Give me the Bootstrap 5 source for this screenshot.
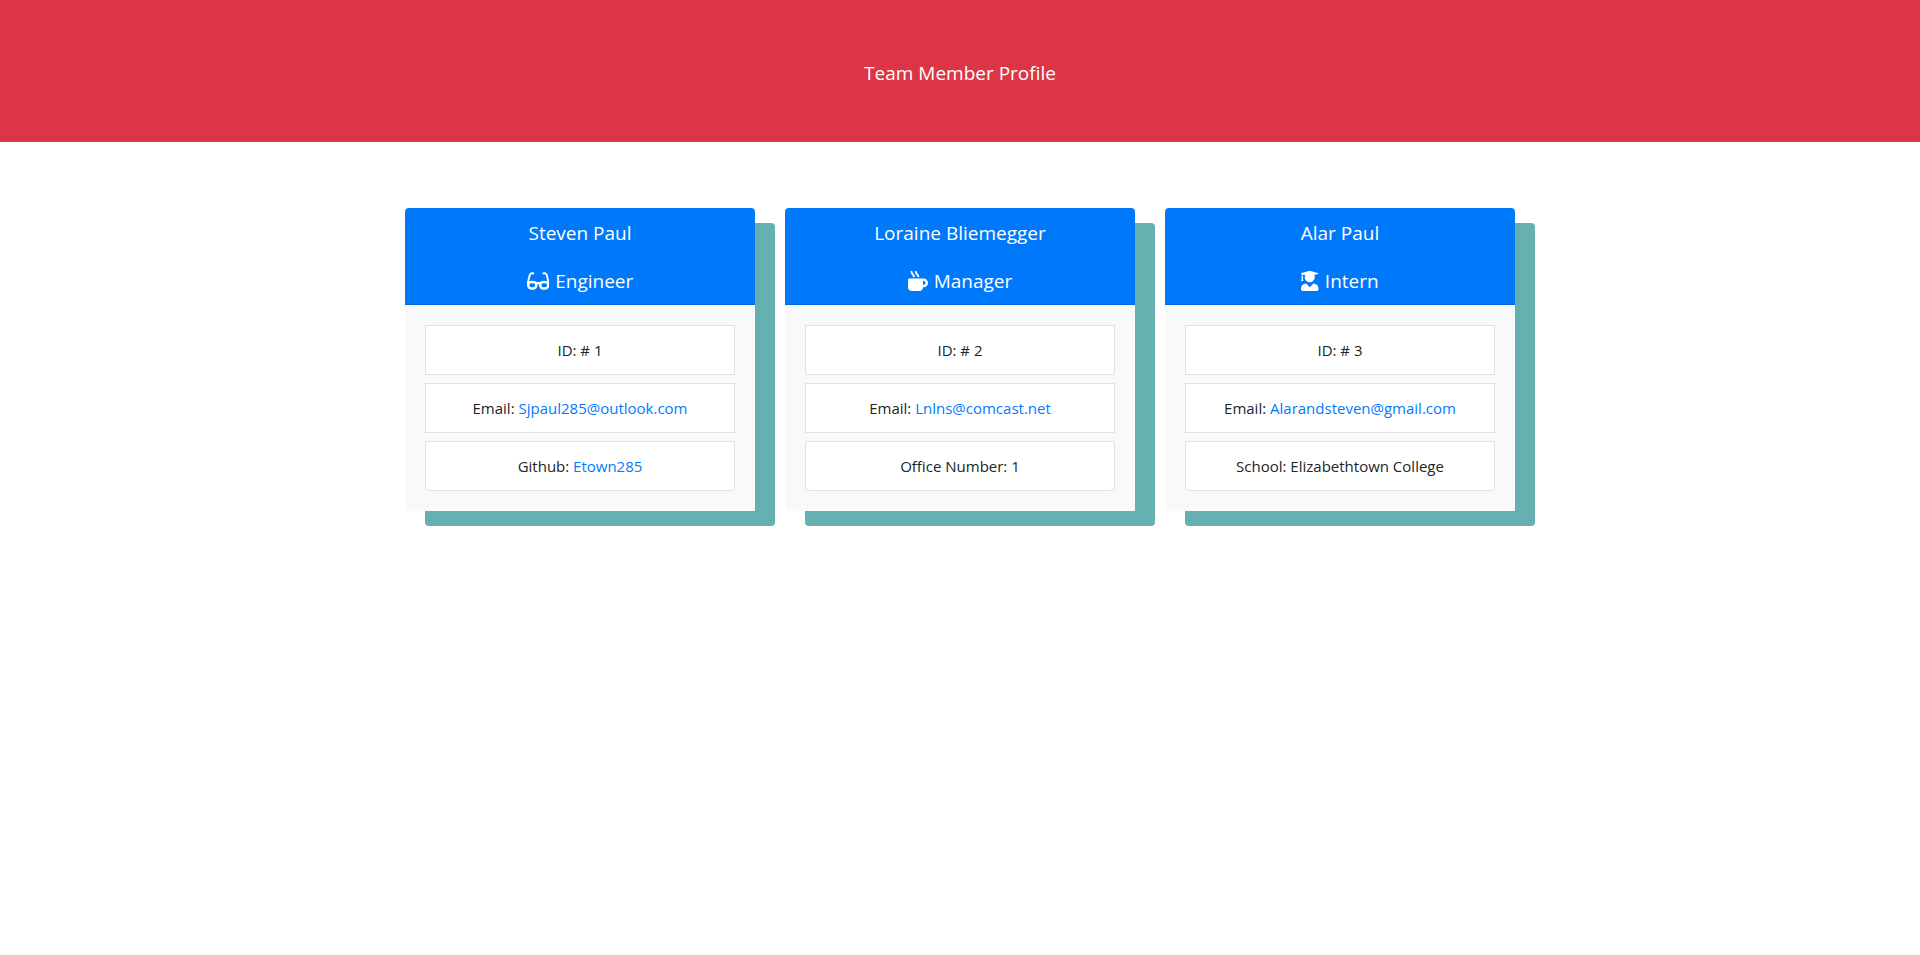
<!DOCTYPE html>
<html lang="en">
<head>
<meta charset="utf-8">
<meta name="viewport" content="width=device-width, initial-scale=1">
<title>Team Member Profile</title>
<link rel="stylesheet" href="https://cdn.jsdelivr.net/npm/bootstrap@5.3.0/dist/css/bootstrap.min.css">
<style>
  body { font-family: "Segoe UI", "Open Sans", "Noto Sans", sans-serif; font-size: 15px; line-height: 24px; color: #212529; }
  .page-banner { background: #dc3545; padding: 58px 16px 54px; margin-bottom: 66px; }
  .page-banner h1 { font-size: 19px; line-height: 30px; font-weight: 400; }
  .team { --bs-gutter-x: 30px; --bs-gutter-y: 30px; }
  .team-wrap { max-width: 1140px; padding: 0 15px 48px; }
  .profile { border: 0; border-radius: 4px; background: none; box-shadow: 20px 15px 0 #66b0b2; }
  .profile .card-header { background: #0078fa; padding: 13px 20px 11px; border-radius: 4px 4px 0 0; border-bottom: 1px solid #0069db; }
  .profile h2, .profile h3 { font-size: 19px; line-height: 24px; font-weight: 400; }
  .profile h2 { margin-bottom: 24px; }
  .profile h3 { gap: 6px; }
  .profile .card-body { background: #f8f9fa; padding: 20px; }
  .profile .list-group { gap: 8px; --bs-list-group-border-radius: 4px; border-radius: 0; }
  .profile .list-group-item { padding: 12px 20px; border: 1px solid #dfe1e5; border-radius: 0; color: #212529; }
  .profile .list-group-item:last-child { border-radius: 0 0 4px 4px; }
  .profile a { color: #007bff; text-decoration: none; }
  .role-icon { height: 20px; fill: currentColor; }
</style>
</head>
<body>
<header class="page-banner text-white text-center">
  <h1 class="m-0">Team Member Profile</h1>
</header>
<main class="container team-wrap">
  <div class="row team text-center">
    <div class="col-12 col-md-6 col-lg-4">
      <article class="card profile">
        <div class="card-header text-white">
          <h2>Steven Paul</h2>
          <h3 class="m-0 d-flex justify-content-center align-items-center"><svg class="role-icon" viewBox="0 0 576 512" aria-hidden="true"><path d="M574.1 280.37L528.75 98.66c-5.91-23.7-21.59-44.05-43-55.81-21.44-11.73-46.97-14.11-70.19-6.33l-15.25 5.08c-8.39 2.79-12.92 11.86-10.12 20.24l5.06 15.18c2.79 8.38 11.85 12.91 20.23 10.12l13.18-4.39c10.87-3.62 23-3.57 33.16 1.73 10.29 5.37 17.57 14.56 20.37 25.82l38.46 153.82c-22.19-6.81-49.79-12.46-81.2-12.46-34.77 0-73.98 7.02-114.85 26.74h-73.18c-40.87-19.74-80.08-26.75-114.86-26.75-31.42 0-59.02 5.65-81.21 12.46l38.46-153.83c2.79-11.25 10.09-20.45 20.38-25.81 10.16-5.3 22.28-5.35 33.15-1.73l13.17 4.39c8.38 2.79 17.44-1.74 20.23-10.12l5.06-15.18c2.8-8.38-1.73-17.45-10.12-20.24l-15.25-5.08c-23.22-7.78-48.75-5.41-70.19 6.33-21.41 11.77-37.09 32.11-43 55.8L1.9 280.37A64.218 64.218 0 0 0 0 295.86v70.25C0 429.01 51.58 480 115.2 480h37.12c60.28 0 110.37-45.94 114.88-105.37l2.93-38.63h35.75l2.93 38.63C313.31 434.06 363.4 480 423.68 480h37.12c63.62 0 115.2-50.99 115.2-113.88v-70.25c0-5.23-.64-10.43-1.9-15.5zm-370.72 89.42c-1.97 25.91-24.4 46.21-51.06 46.21H115.2C86.97 416 64 393.62 64 366.11v-37.54c18.12-6.49 43.42-12.92 72.58-12.92 23.86 0 47.26 4.33 69.93 12.92l-3.13 41.22zM512 366.12c0 27.51-22.97 49.88-51.2 49.88h-37.12c-26.67 0-49.1-20.3-51.06-46.21l-3.13-41.22c22.67-8.59 46.08-12.92 69.95-12.92 29.12 0 54.43 6.44 72.55 12.93v37.54z"/></svg> Engineer</h3>
        </div>
        <div class="card-body">
          <ul class="list-group">
            <li class="list-group-item">ID: # 1</li>
            <li class="list-group-item">Email: <a href="mailto:Sjpaul285@outlook.com">Sjpaul285@outlook.com</a></li>
            <li class="list-group-item">Github: <a href="https://github.com/Etown285">Etown285</a></li>
          </ul>
        </div>
      </article>
    </div>
    <div class="col-12 col-md-6 col-lg-4">
      <article class="card profile">
        <div class="card-header text-white">
          <h2>Loraine Bliemegger</h2>
          <h3 class="m-0 d-flex justify-content-center align-items-center"><svg class="role-icon" viewBox="0 0 512 512" aria-hidden="true"><path d="M127.1 146.5c1.3 7.7 8 13.5 16 13.5h16.5c9.8 0 17.6-8.5 16.3-18-3.8-28.2-16.4-54.2-36.6-74.7-14.4-14.7-23.6-33.3-26.4-53.5C111.8 5.9 105 0 96.8 0H80.4C70.6 0 63 8.5 64.1 18c3.9 31.9 18 61.3 40.6 84.4 12 12.2 19.7 27.5 22.4 44.1zm112 0c1.3 7.7 8 13.5 16 13.5h16.5c9.8 0 17.6-8.5 16.3-18-3.8-28.2-16.4-54.2-36.6-74.7-14.4-14.7-23.6-33.3-26.4-53.5C223.8 5.9 217 0 208.8 0h-16.4c-9.8 0-17.5 8.5-16.3 18 3.9 31.9 18 61.3 40.6 84.4 12 12.2 19.7 27.5 22.4 44.1zM400 192H32c-17.7 0-32 14.3-32 32v192c0 53 43 96 96 96h192c53 0 96-43 96-96h16c61.8 0 112-50.2 112-112s-50.2-112-112-112zm0 160h-16v-96h16c26.5 0 48 21.5 48 48s-21.5 48-48 48z"/></svg> Manager</h3>
        </div>
        <div class="card-body">
          <ul class="list-group">
            <li class="list-group-item">ID: # 2</li>
            <li class="list-group-item">Email: <a href="mailto:Lnlns@comcast.net">Lnlns@comcast.net</a></li>
            <li class="list-group-item">Office Number: 1</li>
          </ul>
        </div>
      </article>
    </div>
    <div class="col-12 col-md-6 col-lg-4">
      <article class="card profile">
        <div class="card-header text-white">
          <h2>Alar Paul</h2>
          <h3 class="m-0 d-flex justify-content-center align-items-center"><svg class="role-icon" viewBox="0 0 448 512" aria-hidden="true"><path d="M319.4 320.6L224 416l-95.4-95.4C57.1 323.7 0 382.2 0 454.4v9.6c0 26.5 21.5 48 48 48h352c26.5 0 48-21.5 48-48v-9.6c0-72.2-57.1-130.7-128.6-133.8zM13.6 79.8l6.4 1.5v58.4c-7 4.2-12 11.5-12 20.3 0 8.4 4.6 15.4 11.1 19.7L3.5 242c-1.7 6.9 2.1 14 7.6 14h41.8c5.5 0 9.3-7.1 7.6-14l-15.6-62.3C51.4 175.4 56 168.4 56 160c0-8.8-5-16.1-12-20.3V87.1l66 15.9c-8.6 17.2-14 36.4-14 57 0 70.7 57.3 128 128 128s128-57.3 128-128c0-20.6-5.3-39.8-14-57l96.3-23.2c18.2-4.4 18.2-27.1 0-31.5l-190.4-46c-13-3.1-26.7-3.1-39.7 0L13.6 48.2c-18.1 4.4-18.1 27.2 0 31.6z"/></svg> Intern</h3>
        </div>
        <div class="card-body">
          <ul class="list-group">
            <li class="list-group-item">ID: # 3</li>
            <li class="list-group-item">Email: <a href="mailto:Alarandsteven@gmail.com">Alarandsteven@gmail.com</a></li>
            <li class="list-group-item">School: Elizabethtown College</li>
          </ul>
        </div>
      </article>
    </div>
  </div>
</main>
<script src="https://cdn.jsdelivr.net/npm/bootstrap@5.3.0/dist/js/bootstrap.bundle.min.js"></script>
</body>
</html>
